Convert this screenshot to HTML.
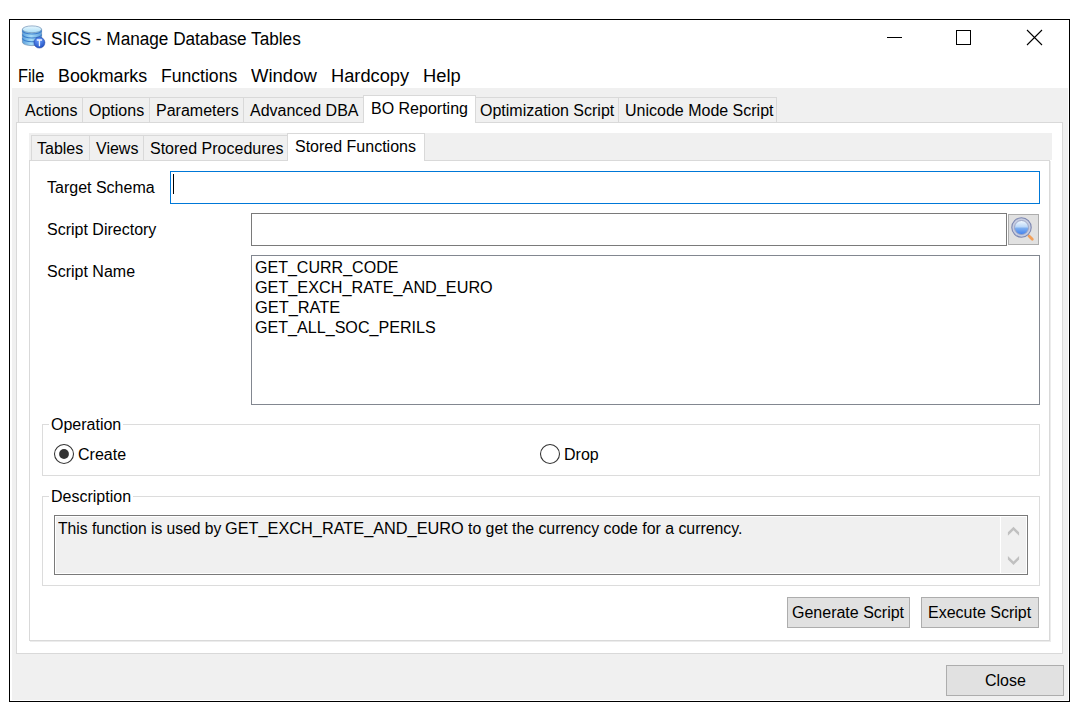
<!DOCTYPE html>
<html><head><meta charset="utf-8"><style>
html,body{margin:0;padding:0;background:#fff;width:1078px;height:713px;overflow:hidden;}
div,svg{position:absolute;box-sizing:border-box;}
.t{white-space:pre;font-family:"Liberation Sans",sans-serif;}
</style></head><body>
<div style="left:9px;top:19px;width:1061px;height:683px;background:#fff;border:1px solid #000;"></div>
<div style="left:12px;top:88px;width:1056px;height:612px;background:#f0f0f0;"></div>
<svg style="left:19px;top:22px" width="30" height="30" viewBox="0 0 30 30">
<defs><linearGradient id="cyl" x1="0" x2="1" y1="0" y2="0"><stop offset="0" stop-color="#5a9fdc"/><stop offset="0.45" stop-color="#a6dcf8"/><stop offset="1" stop-color="#5d9edc"/></linearGradient>
<radialGradient id="badge" cx="0.45" cy="0.3" r="0.75"><stop offset="0" stop-color="#6fa2ff"/><stop offset="1" stop-color="#1b4bbf"/></radialGradient>
<linearGradient id="topg" x1="0" x2="0" y1="0" y2="1"><stop offset="0" stop-color="#e8f8ff"/><stop offset="1" stop-color="#a8dcf6"/></linearGradient></defs>
<path d="M3.4 7.3 V20.2 A9.6 3.4 0 0 0 22.6 20.2 V7.3" fill="url(#cyl)" stroke="#6d8db2" stroke-width="0.7"/>
<path d="M3.4 8.6 A9.6 3.4 0 0 0 22.6 8.6 M3.4 12.6 A9.6 3.4 0 0 0 22.6 12.6 M3.4 16.3 A9.6 3.4 0 0 0 22.6 16.3" fill="none" stroke="#3a7dcc" stroke-width="1.1"/>
<ellipse cx="13" cy="7.3" rx="9.6" ry="3.4" fill="url(#topg)" stroke="#7090b4" stroke-width="0.7"/>
<circle cx="20.4" cy="20.6" r="5.5" fill="url(#badge)" stroke="#27459a" stroke-width="0.5"/>
<path d="M17.8 18 H23.1 M20.45 17.5 V24.2" stroke="#eef4ff" stroke-width="1.3"/>
</svg>
<div class="t" style="left:51px;top:30px;font-size:18px;line-height:18px;color:#000;transform:scaleX(0.9538);transform-origin:0 0;">SICS - Manage Database Tables</div>
<div style="left:887px;top:37px;width:15px;height:1px;background:#000;"></div>
<div style="left:956px;top:30px;width:15px;height:15px;border:1px solid #000;"></div>
<svg style="left:1026px;top:29px" width="17" height="17" viewBox="0 0 17 17"><path d="M1 1 L16 16 M16 1 L1 16" stroke="#000" stroke-width="1.1"/></svg>
<div class="t" style="left:18px;top:67px;font-size:18px;line-height:18px;color:#000;transform:scaleX(0.9074);transform-origin:0 0;">File</div>
<div class="t" style="left:58px;top:67px;font-size:18px;line-height:18px;color:#000;transform:scaleX(0.9909);transform-origin:0 0;">Bookmarks</div>
<div class="t" style="left:161px;top:67px;font-size:18px;line-height:18px;color:#000;transform:scaleX(0.9763);transform-origin:0 0;">Functions</div>
<div class="t" style="left:251px;top:67px;font-size:18px;line-height:18px;color:#000;transform:scaleX(1.0281);transform-origin:0 0;">Window</div>
<div class="t" style="left:331px;top:67px;font-size:18px;line-height:18px;color:#000;transform:scaleX(1.0132);transform-origin:0 0;">Hardcopy</div>
<div class="t" style="left:423px;top:67px;font-size:18px;line-height:18px;color:#000;transform:scaleX(1.0171);transform-origin:0 0;">Help</div>
<div style="left:16px;top:122px;width:1047px;height:532px;background:#fff;border:1px solid #d9d9d9;"></div>
<div style="left:18px;top:97px;width:65px;height:26px;background:#f0f0f0;border:1px solid #d9d9d9;"></div>
<div class="t" style="left:25px;top:103px;font-size:16px;line-height:16px;color:#000;">Actions</div>
<div style="left:82px;top:97px;width:68px;height:26px;background:#f0f0f0;border:1px solid #d9d9d9;"></div>
<div class="t" style="left:89px;top:103px;font-size:16px;line-height:16px;color:#000;">Options</div>
<div style="left:149px;top:97px;width:95px;height:26px;background:#f0f0f0;border:1px solid #d9d9d9;"></div>
<div class="t" style="left:156px;top:103px;font-size:16px;line-height:16px;color:#000;">Parameters</div>
<div style="left:243px;top:97px;width:121px;height:26px;background:#f0f0f0;border:1px solid #d9d9d9;"></div>
<div class="t" style="left:250px;top:103px;font-size:16px;line-height:16px;color:#000;">Advanced DBA</div>
<div style="left:475px;top:97px;width:144px;height:26px;background:#f0f0f0;border:1px solid #d9d9d9;"></div>
<div class="t" style="left:480px;top:103px;font-size:16px;line-height:16px;color:#000;">Optimization Script</div>
<div style="left:618px;top:97px;width:159px;height:26px;background:#f0f0f0;border:1px solid #d9d9d9;"></div>
<div class="t" style="left:625px;top:103px;font-size:16px;line-height:16px;color:#000;">Unicode Mode Script</div>
<div style="left:363px;top:95px;width:113px;height:28px;background:#fff;border:1px solid #d9d9d9;border-bottom:none;"></div>
<div class="t" style="left:371px;top:101px;font-size:16px;line-height:16px;color:#000;">BO Reporting</div>
<div style="left:29px;top:133px;width:1023px;height:27px;background:#f0f0f0;"></div>
<div style="left:29px;top:160px;width:1021px;height:481px;background:#fff;border:1px solid #d9d9d9;box-shadow:1px 1px 0 #ececec;"></div>
<div style="left:31px;top:135px;width:59px;height:26px;background:#f0f0f0;border:1px solid #d9d9d9;"></div>
<div class="t" style="left:37px;top:141px;font-size:16px;line-height:16px;color:#000;">Tables</div>
<div style="left:89px;top:135px;width:55px;height:26px;background:#f0f0f0;border:1px solid #d9d9d9;"></div>
<div class="t" style="left:96px;top:141px;font-size:16px;line-height:16px;color:#000;">Views</div>
<div style="left:143px;top:135px;width:145px;height:26px;background:#f0f0f0;border:1px solid #d9d9d9;"></div>
<div class="t" style="left:150px;top:141px;font-size:16px;line-height:16px;color:#000;">Stored Procedures</div>
<div style="left:287px;top:133px;width:138px;height:28px;background:#fff;border:1px solid #d9d9d9;border-bottom:none;"></div>
<div class="t" style="left:295px;top:139px;font-size:16px;line-height:16px;color:#000;">Stored Functions</div>
<div class="t" style="left:47px;top:180px;font-size:16px;line-height:16px;color:#000;">Target Schema</div>
<div class="t" style="left:47px;top:222px;font-size:16px;line-height:16px;color:#000;">Script Directory</div>
<div class="t" style="left:47px;top:264px;font-size:16px;line-height:16px;color:#000;">Script Name</div>
<div style="left:170px;top:171px;width:870px;height:33px;background:#fff;border:1px solid #0078d7;"></div>
<div style="left:173px;top:174px;width:1px;height:20px;background:#000;"></div>
<div style="left:251px;top:213px;width:756px;height:33px;background:#fff;border:1px solid #7a7a7a;"></div>
<div style="left:1008px;top:214px;width:31px;height:31px;background:#e1e1e1;border:1px solid #adadad;"></div>
<svg style="left:1008px;top:214px" width="31" height="31" viewBox="0 0 31 31">
<defs><linearGradient id="gl" x1="0" y1="0" x2="0" y2="1"><stop offset="0" stop-color="#f4fbff"/><stop offset="0.45" stop-color="#bcd8f8"/><stop offset="0.55" stop-color="#7fb0f0"/><stop offset="1" stop-color="#3f80f0"/></linearGradient></defs>
<line x1="21" y1="22" x2="24.3" y2="25.3" stroke="#f2a05a" stroke-width="2.8" stroke-linecap="round"/>
<circle cx="13.5" cy="13.5" r="9.7" fill="#c6cce0" stroke="#7d88b2" stroke-width="1.1"/>
<circle cx="13.5" cy="13.5" r="7" fill="url(#gl)" stroke="#98a2c2" stroke-width="0.9"/>
</svg>
<div style="left:251px;top:255px;width:789px;height:150px;background:#fff;border:1px solid #828790;"></div>
<div class="t" style="left:255px;top:260px;font-size:16px;line-height:16px;color:#000;transform:scaleX(1.002);transform-origin:0 0;">GET_CURR_CODE</div>
<div class="t" style="left:255px;top:280px;font-size:16px;line-height:16px;color:#000;transform:scaleX(1.014);transform-origin:0 0;">GET_EXCH_RATE_AND_EURO</div>
<div class="t" style="left:255px;top:300px;font-size:16px;line-height:16px;color:#000;transform:scaleX(1.024);transform-origin:0 0;">GET_RATE</div>
<div class="t" style="left:255px;top:320px;font-size:16px;line-height:16px;color:#000;transform:scaleX(1.006);transform-origin:0 0;">GET_ALL_SOC_PERILS</div>
<div style="left:42px;top:424px;width:998px;height:52px;border:1px solid #dcdcdc;"></div>
<div style="left:49px;top:418px;width:74px;height:13px;background:#fff;"></div>
<div class="t" style="left:51px;top:417px;font-size:16px;line-height:16px;color:#000;">Operation</div>
<svg style="left:53px;top:443px" width="22" height="22" viewBox="0 0 22 22"><circle cx="11" cy="11" r="9.5" fill="#fff" stroke="#333" stroke-width="1.05"/><circle cx="11" cy="11" r="4.9" fill="#333"/></svg>
<div class="t" style="left:78px;top:447px;font-size:16px;line-height:16px;color:#000;">Create</div>
<svg style="left:539px;top:443px" width="22" height="22" viewBox="0 0 22 22"><circle cx="11" cy="11" r="9.5" fill="#fff" stroke="#333" stroke-width="1.05"/></svg>
<div class="t" style="left:564px;top:447px;font-size:16px;line-height:16px;color:#000;">Drop</div>
<div style="left:42px;top:496px;width:998px;height:90px;border:1px solid #dcdcdc;"></div>
<div style="left:49px;top:488px;width:84px;height:15px;background:#fff;"></div>
<div class="t" style="left:51px;top:489px;font-size:16px;line-height:16px;color:#000;">Description</div>
<div style="left:54px;top:515px;width:974px;height:60px;background:#f0f0f0;border:1px solid #7a7a7a;box-shadow:inset 0 0 0 1px #fff;"></div>
<div style="left:1000px;top:516px;width:1px;height:58px;background:#fff;"></div>
<svg style="left:1001px;top:516px" width="26" height="58" viewBox="0 0 26 58"><path d="M12.5 10.7 L18.1 16.3 L18.1 19.8 L12.5 14.2 L6.9 19.8 L6.9 16.3 Z M6.9 39.9 L12.5 45.4 L18.1 39.9 L18.1 43.5 L12.5 48.9 L6.9 43.5 Z" fill="#c0c0c0"/></svg>
<div class="t" style="left:58px;top:521px;font-size:16px;line-height:16px;color:#000;transform:scaleX(0.9772);transform-origin:0 0;">This function is used by</div>
<div class="t" style="left:224.6px;top:521px;font-size:16px;line-height:16px;color:#000;transform:scaleX(1.0185);transform-origin:0 0;">GET_EXCH_RATE_AND_EURO</div>
<div class="t" style="left:467.5px;top:521px;font-size:16px;line-height:16px;color:#000;transform:scaleX(0.9899);transform-origin:0 0;">to get the currency code for a currency.</div>
<div style="left:787px;top:597px;width:123px;height:31px;background:#e1e1e1;border:1px solid #adadad;"></div>
<div class="t" style="left:792px;top:605px;font-size:16px;line-height:16px;color:#000;">Generate Script</div>
<div style="left:921px;top:597px;width:118px;height:31px;background:#e1e1e1;border:1px solid #adadad;"></div>
<div class="t" style="left:928px;top:605px;font-size:16px;line-height:16px;color:#000;">Execute Script</div>
<div style="left:946px;top:665px;width:118px;height:31px;background:#e1e1e1;border:1px solid #adadad;"></div>
<div class="t" style="left:985px;top:673px;font-size:16px;line-height:16px;color:#000;">Close</div>
</body></html>
